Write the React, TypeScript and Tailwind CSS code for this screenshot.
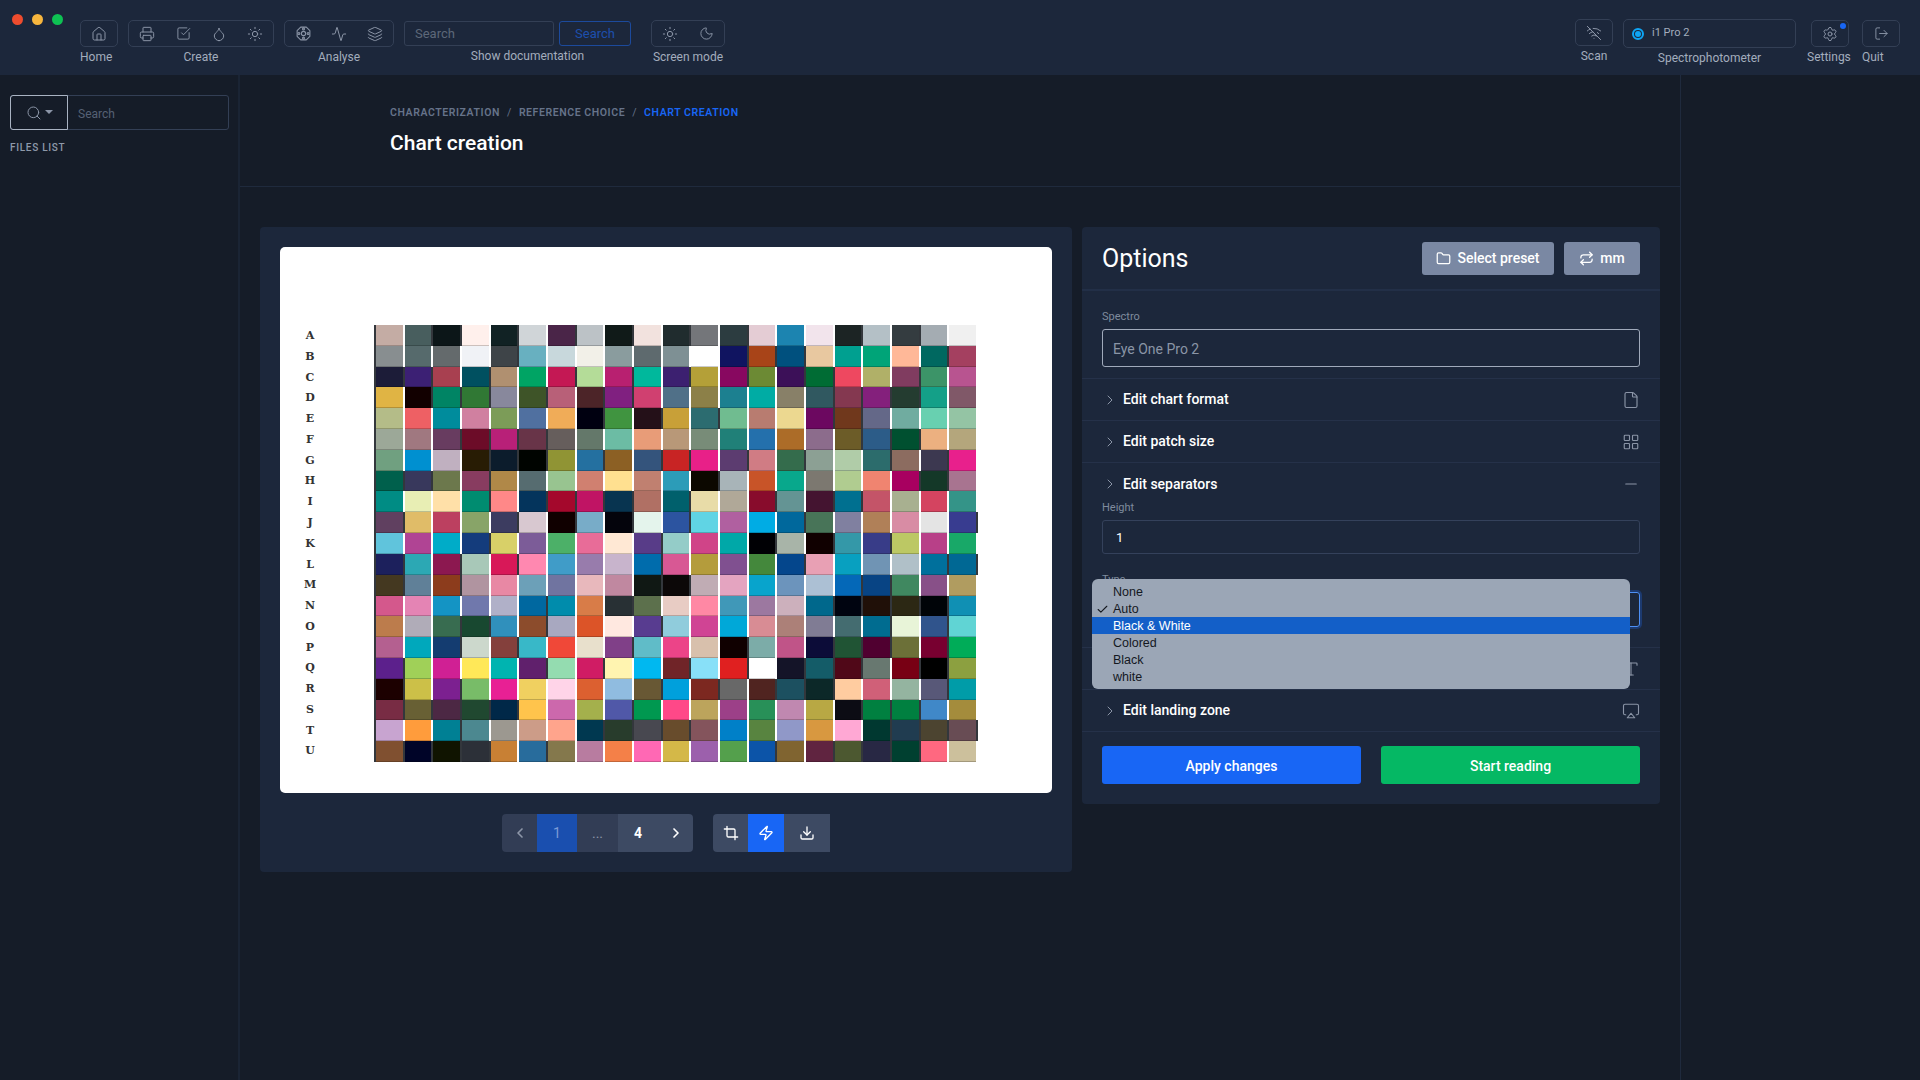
import type { ReactNode } from 'react'
import {
  Activity,
  Airplay,
  Check,
  ChevronLeft,
  ChevronRight,
  Crop,
  Download,
  File,
  Folder,
  Home,
  Layers,
  LayoutGrid,
  LogOut,
  Minus,
  Moon,
  Printer,
  Repeat,
  Search,
  Settings,
  SquareCheckBig,
  Sun,
  Droplet,
  Type,
  WifiOff,
  Zap,
} from 'lucide-react'

const CHART = `c4aca4 485e5e 0c1618 fff0ec 112224 d0d5d8 4a2548 bcc2c6 101a18 f2e2de 202c2e 74767a 2c3c40 e4ccd4 1c84b0 f2e4ec 1c2424 b4c0c6 343c40 a4acb2 f0f0f0
888e90 566a6c 646a6c f0f2f6 3e4448 68b0c0 c8d8dc f2f0e8 8a9c9e 5e6a6e 7e9094 ffffff 101460 a84418 00507e e8c8a0 00a090 00a478 ffb898 006860 a44060
1c1c38 3c2074 a84050 005060 b09070 00a464 c41854 b4dc98 b82070 00b89c 3c2070 b4a038 880860 6c8a34 3c1058 006c34 ee4860 b0b068 803c60 3c9468 b85490
e0b444 120000 008464 307834 88889c 3e5428 b86078 4c2428 802080 d04070 507088 8c8048 1c8090 00aca4 888068 305860 843850 84207c 243c30 14a088 805868
b4bc88 ee6064 008c9c d080a0 7c9c58 5070a0 f0ac58 000010 409440 241018 c8a038 2c6c70 70bc90 b87c70 ecd890 6c0860 70381c 646888 70aca0 68d0b0 94c4a4
9ca898 a07880 683c60 6c0c28 b82078 683448 665e5c 64786a 6cbca4 e89c78 b89878 788c78 208078 2470ac ac6c28 8c6c8c 6c5c28 2c5c88 005030 ecb080 b4a67c
70a080 0090d0 c0b0c0 281c04 0c1c2c 000400 909434 2470a0 8c6024 34547c c82424 e82088 5c3c70 d07c84 346c4c 8ca094 b0cca8 2c6c6c 8c6c60 3c3850 e8208c
00604c 38385c 6c784c 883c60 b08848 566c70 98c490 d08070 ffe090 c08070 2c9cb8 0c0800 a8b4b8 c85428 08a88c 7c7870 b0cc90 f08470 a80060 143828 a87490
008c84 e8eeb4 ffe0a8 008c70 ff8888 04345c a4082c c01464 083450 b07064 00606c e8dca8 b0a898 880c2c 649494 441430 007090 c45468 a8b090 d44460 349488
604060 e0bc68 bc4060 88a468 3c3c60 d8c8d0 100000 78acc8 04040c e4f4ec 2c54a0 60d4e4 b060a0 00ace4 00689c 487458 8080a0 b08058 d88ca4 e4e4e4 383c90
60c4dc b04494 00acc8 143c7c d8d068 7c5c98 4cb068 e86c98 ffe8d4 583c88 94ccc8 d04488 00a8a8 000004 a8b4a8 100000 3498a8 383c88 bcc864 b84088 18a868
1c205c 2ca8b4 8c1850 a8c8b8 d81858 ff88b0 409cc8 987cac c8b4cc 006cac d85894 b49c3c 805090 44883c 04468c e8a0b4 08a0c0 7094b4 b0c0c8 00709c 006894
443820 608098 8c3c1c b094a0 e888a4 6ca0b8 7074a0 e8b8bc c088a0 101814 0c0808 c0acb4 e4a4c0 08a4cc 6c94bc acc0d4 0468b8 084484 408860 885088 b09c60
d4588c e484b4 1494c4 7078ac b0b0c8 0068a0 008cac d87c48 283034 5c704c e8ccc4 ff88a4 4098b8 9c78a0 ccb0bc 00688c 000410 201008 2c2814 000408 1090b4
bc7c4c b0acb8 386c50 184830 3090bc 8c4c2c a8a8c0 dc5428 ffe8e0 583c90 90ccdc d04494 00a8d8 d88c94 ac8078 807c94 446c70 006c90 e8f4d8 30548c 60d4d4
b46090 00a8bc 143c70 ccd8cc 84403c 38b8c8 f04838 e8e0cc 804088 60bcc8 ec4488 d8c0ac 100000 7caca8 c05488 0c0c38 205434 500030 6c7038 780030 00ac58
5c208c a0d058 d02094 ffe858 00b4b0 60206c 94dcb0 d01c64 fff4b0 00b8f0 702428 88e0f8 e02020 ffffff 141428 145c68 500818 687870 780014 000000 8ca040
1c0000 ccc048 7c2090 78bc68 e82094 f0d060 ffd4e8 dc6030 90bce0 685834 00a0dc 7c2820 686868 502420 1c5060 0c2828 ffcca0 d06078 94b4a0 585878 009ca8
782c44 686034 4c2844 204830 002848 ffc44c cc68ac a4b04c 5058a8 009850 ff4888 bca45c 9c4088 289058 c088b0 b8a844 0c0c14 008040 008040 4088c8 a48c3c
c8a4d0 ff9c3c 008094 4c8890 9c9890 cc9c88 ffa48c 003850 283c2c 484850 684c2c 84545c 0080c8 588440 9098c8 d89840 ffa8d4 003830 203c50 4c4430 684c54
805030 000428 101400 2c3038 c88034 286c9c 84784c b87ca0 f48048 ff68b4 d4b848 9c60ac 54a04c 0c54a8 806430 602440 4c5830 282844 004030 ff6880 ccc09c`
  .split('\n')
  .map((row) => row.trim().split(' '))

const LETTERS = 'ABCDEFGHIJKLMNOPQRSTU'.split('')

const OPTIONS = ['None', 'Auto', 'Black & White', 'Colored', 'Black', 'white']

// separator takes the light or dark side depending on the patch before it
function separatorFor(hex: string) {
  const r = parseInt(hex.slice(0, 2), 16)
  const g = parseInt(hex.slice(2, 4), 16)
  const b = parseInt(hex.slice(4, 6), 16)
  return 0.3 * r + 0.59 * g + 0.11 * b > 95 ? '#ffffff' : '#33373c'
}

function ToolIcon({ children }: { children: ReactNode }) {
  return <span className="flex w-9 items-center justify-center text-[#8b95a7]">{children}</span>
}

function ToolBox({ children, className = '' }: { children: ReactNode; className?: string }) {
  return (
    <div className={`flex h-[27px] items-center justify-around rounded-[5px] border border-[#333f55] ${className}`}>
      {children}
    </div>
  )
}

function BarLabel({ children, className = '' }: { children: ReactNode; className?: string }) {
  return <div className={`text-[12px] leading-4 text-[#a3adbd] ${className}`}>{children}</div>
}

function AnalyseIcon() {
  return (
    <svg width="17" height="17" viewBox="0 0 24 24" fill="none" stroke="currentColor" strokeWidth="1.5">
      <path d="M8 3h8l5 5v8l-5 5H8l-5-5V8Z" strokeLinejoin="round" />
      <circle cx="12" cy="12" r="3" />
      <circle cx="12" cy="5.5" r="1.4" />
      <circle cx="12" cy="18.5" r="1.4" />
      <circle cx="5.5" cy="12" r="1.4" />
      <circle cx="18.5" cy="12" r="1.4" />
    </svg>
  )
}

function TopBar() {
  return (
    <header className="flex h-[75px] bg-[#1c273b]">
      <div className="flex w-[80px] shrink-0 gap-[9px] pl-[12px] pt-[14px]">
        <span className="h-[11px] w-[11px] rounded-full bg-[#ee4c2e]" />
        <span className="h-[11px] w-[11px] rounded-full bg-[#f7b63e]" />
        <span className="h-[11px] w-[11px] rounded-full bg-[#0ec253]" />
      </div>

      <div className="flex flex-1 pt-[20px]">
        <div className="w-[38px]">
          <ToolBox>
            <Home size={16} strokeWidth={1.5} className="text-[#8b95a7]" />
          </ToolBox>
          <BarLabel className="mt-[2px]">Home</BarLabel>
        </div>

        <div className="ml-[10px] w-[146px]">
          <ToolBox>
            <ToolIcon><Printer size={16} strokeWidth={1.5} /></ToolIcon>
            <ToolIcon><SquareCheckBig size={15} strokeWidth={1.5} /></ToolIcon>
            <ToolIcon><Droplet size={16} strokeWidth={1.5} /></ToolIcon>
            <ToolIcon><Sun size={16} strokeWidth={1.5} /></ToolIcon>
          </ToolBox>
          <BarLabel className="mt-[2px] text-center">Create</BarLabel>
        </div>

        <div className="ml-[10px] w-[110px]">
          <ToolBox>
            <ToolIcon><AnalyseIcon /></ToolIcon>
            <ToolIcon><Activity size={16} strokeWidth={1.5} /></ToolIcon>
            <ToolIcon><Layers size={16} strokeWidth={1.5} /></ToolIcon>
          </ToolBox>
          <BarLabel className="mt-[2px] text-center">Analyse</BarLabel>
        </div>

        <div className="ml-[10px] w-[227px] pt-[1px]">
          <div className="flex gap-[5px]">
            <div className="flex h-[25px] w-[150px] items-center rounded-[3px] border border-[#333f55] px-[10px] pt-[1px] text-[13px] text-[#5d6879]">
              Search
            </div>
            <div className="flex h-[25px] w-[72px] items-center justify-center rounded-[3px] border border-[#1c4a9c] text-[13px] text-[#1c4fad]">
              Search
            </div>
          </div>
          <BarLabel className="mt-[2px] pl-[20px] text-center">Show documentation</BarLabel>
        </div>

        <div className="ml-[20px] w-[74px]">
          <ToolBox>
            <ToolIcon><Sun size={16} strokeWidth={1.5} /></ToolIcon>
            <ToolIcon><Moon size={15} strokeWidth={1.5} /></ToolIcon>
          </ToolBox>
          <BarLabel className="mt-[2px] text-center">Screen mode</BarLabel>
        </div>
      </div>

      <div className="flex pr-[20px] pt-[19px]">
        <div className="w-[38px]">
          <ToolBox>
            <WifiOff size={16} strokeWidth={1.5} className="text-[#8b95a7]" />
          </ToolBox>
          <BarLabel className="mt-[2px] text-center">Scan</BarLabel>
        </div>

        <div className="ml-[10px] w-[173px]">
          <div className="flex h-[29px] items-center gap-[8px] rounded-[5px] border border-[#333f55] pl-[8px] text-[11px] text-[#a3adbd]">
            <span className="flex h-[12px] w-[12px] items-center justify-center rounded-full border-[2px] border-[#0ea5f5]">
              <span className="h-[6px] w-[6px] rounded-full bg-[#0ea5f5]" />
            </span>
            i1 Pro 2
          </div>
          <BarLabel className="mt-[2px] text-center">Spectrophotometer</BarLabel>
        </div>

        <div className="ml-[15px] w-[38px] pt-[1px]">
          <div className="relative">
            <ToolBox>
              <Settings size={16} strokeWidth={1.5} className="text-[#8b95a7]" />
            </ToolBox>
            <span className="absolute right-[3px] top-[3px] h-[6px] w-[6px] rounded-full bg-[#1866f5]" />
          </div>
          <BarLabel className="mt-[2px] whitespace-nowrap -ml-[4px]">Settings</BarLabel>
        </div>

        <div className="ml-[13px] w-[38px] pt-[1px]">
          <ToolBox>
            <LogOut size={15} strokeWidth={1.5} className="text-[#8b95a7]" />
          </ToolBox>
          <BarLabel className="mt-[2px]">Quit</BarLabel>
        </div>
      </div>
    </header>
  )
}

function Sidebar() {
  return (
    <aside className="border-r-2 border-[#1a2434] pl-[10px] pr-[9px] pt-[20px]">
      <div className="flex h-[35px] rounded-[3px] border border-[#333f55]">
        <div className="-m-[1px] flex w-[58px] items-center justify-center gap-[3px] rounded-l-[3px] border border-[#a9b3c2] text-[#8b95a7]">
          <Search size={16} strokeWidth={1.5} />
          <span className="mb-[2px] h-0 w-0 border-x-[4px] border-t-[4px] border-x-transparent border-t-[#8b95a7]" />
        </div>
        <div className="flex items-center pl-[11px] pt-[2px] text-[12px] text-[#566175]">Search</div>
      </div>
      <div className="mt-[10px] text-[10px] font-medium tracking-[0.07em] text-[#8e99aa]">FILES LIST</div>
    </aside>
  )
}

function ChartPreview() {
  return (
    <section className="w-[812px] rounded-[4px] bg-[#1c273b] px-[20px] pb-[20px] pt-[20px]">
      <div className="flex h-[546px] rounded-[5px] bg-white pt-[78px]">
        <div className="grid h-[437px] w-[94px] grid-rows-[repeat(21,1fr)] pr-[34px] pt-[1px] font-['DejaVu_Serif',serif] text-[11px] font-bold text-[#333333]">
          {LETTERS.map((letter) => (
            <div key={letter} className="flex items-center justify-center">{letter}</div>
          ))}
        </div>
        <div className="grid h-[437px] w-[604px] grid-cols-[repeat(21,1fr)] grid-rows-[repeat(21,1fr)] bg-[#33373c] pl-[2px]">
          {CHART.flat().map((hex, i) => (
            <div key={i} style={{ backgroundColor: separatorFor(hex) }}>
              <div className="mr-[2px] h-full border-b border-black/20" style={{ backgroundColor: `#${hex}` }} />
            </div>
          ))}
        </div>
      </div>

      <div className="mt-[21px] flex h-[38px] justify-center gap-[20px]">
        <div className="flex overflow-hidden rounded-[4px] text-[14px]">
          <div className="flex w-[35px] items-center justify-center bg-[#323d55] text-[#8d96a8]">
            <ChevronLeft size={16} strokeWidth={2.5} />
          </div>
          <div className="flex w-[40px] items-center justify-center bg-[#1a4faf] text-[#7d9bd6]">1</div>
          <div className="flex w-[41px] items-center justify-center bg-[#323d55] text-[#8d96a8]">...</div>
          <div className="flex w-[40px] items-center justify-center bg-[#3d4a63] font-bold text-white">4</div>
          <div className="flex w-[35px] items-center justify-center bg-[#3d4a63] text-white">
            <ChevronRight size={16} strokeWidth={2.5} />
          </div>
        </div>
        <div className="flex overflow-hidden rounded-l-[4px] text-white">
          <div className="flex w-[35px] items-center justify-center bg-[#3d4a63]"><Crop size={16} /></div>
          <div className="flex w-[36px] items-center justify-center bg-[#1866f5]"><Zap size={16} /></div>
          <div className="flex w-[46px] items-center justify-center bg-[#3d4a63]"><Download size={16} /></div>
        </div>
      </div>
    </section>
  )
}

function OptionRow({ title, icon, border = true }: { title?: string; icon: ReactNode; border?: boolean }) {
  return (
    <div className={`flex h-[42px] items-center px-[20px] ${border ? 'border-b border-[#253149]' : ''}`}>
      <ChevronRight size={16} strokeWidth={1.5} className="text-[#8b95a7]" />
      <span className="ml-[5px] flex-1 text-[14px] font-medium text-white">{title}</span>
      <span className="text-[#8b95a7]">{icon}</span>
    </div>
  )
}

function FieldLabel({ children }: { children: ReactNode }) {
  return <div className="text-[11px] leading-[14px] text-[#7f8b9d]">{children}</div>
}

function OptionsPanel() {
  return (
    <section className="relative w-[578px] self-start rounded-[4px] bg-[#1c273b]">
      <div className="flex h-[64px] items-center justify-between border-b-2 border-[#222f47] px-[20px] pt-[1px]">
        <h2 className="text-[25px] text-white">Options</h2>
        <div className="flex gap-[10px]">
          <div className="flex h-[33px] w-[132px] items-center justify-center gap-[6px] rounded-[3px] bg-[#7a88a3] text-[14px] font-medium text-white">
            <Folder size={15} />
            Select preset
          </div>
          <div className="flex h-[33px] w-[76px] items-center justify-center gap-[6px] rounded-[3px] bg-[#7a88a3] text-[14px] font-medium text-white">
            <Repeat size={15} />
            mm
          </div>
        </div>
      </div>

      <div className="border-b border-[#253149] px-[20px] pb-[11px] pt-[19px]">
        <FieldLabel>Spectro</FieldLabel>
        <div className="mt-[5px] flex h-[38px] items-center rounded-[3px] border border-[#a0aabb] px-[10px] pt-[2px] text-[14px] text-[#8a95a6]">
          Eye One Pro 2
        </div>
      </div>

      <OptionRow title="Edit chart format" icon={<File size={18} strokeWidth={1.5} />} />
      <OptionRow title="Edit patch size" icon={<LayoutGrid size={18} strokeWidth={1.5} />} />
      <OptionRow title="Edit separators" icon={<Minus size={18} strokeWidth={1.5} />} border={false} />

      <div className="border-b border-[#253149] px-[20px] pb-[20px]">
        <div className="-mt-[4px]"><FieldLabel>Height</FieldLabel></div>
        <div className="mt-[5px] flex h-[34px] items-center rounded-[3px] border border-[#34415b] px-[13px] pt-[2px] text-[13px] text-white">
          1
        </div>
        <div className="mt-[19px]"><FieldLabel>Type</FieldLabel></div>
        <div className="mt-[5px] h-[35px] rounded-[3px] border border-[#4d8ff5] shadow-[0_0_0_2px_#1c3a70]" />
      </div>

      {/* title of this row is covered by the open select */}
      <OptionRow icon={<Type size={18} strokeWidth={1.5} />} />
      <OptionRow title="Edit landing zone" icon={<Airplay size={18} strokeWidth={1.5} />} />

      <div className="flex gap-[20px] px-[20px] pb-[20px] pt-[14px]">
        <div className="flex h-[38px] flex-1 items-center justify-center rounded-[3px] bg-[#1866f5] pt-[2px] text-[14px] font-medium text-white">
          Apply changes
        </div>
        <div className="flex h-[38px] flex-1 items-center justify-center rounded-[3px] bg-[#05b864] pt-[2px] text-[14px] font-medium text-white">
          Start reading
        </div>
      </div>

      {/* native select popup, sits over the Type field */}
      <div className="absolute left-[10px] top-[352px] w-[538px] rounded-[6px] bg-[#9ba6b6] py-[4px] font-['Liberation_Sans',sans-serif] text-[12.5px] text-[#14181f]">
        {OPTIONS.map((option) => (
          <div
            key={option}
            className={`relative flex h-[17px] items-center pl-[21px] pt-[1px] ${option === 'Black & White' ? 'bg-[#135fc8] text-white' : ''}`}
          >
            {option === 'Auto' && <Check size={13} strokeWidth={2} className="absolute left-[4px]" />}
            {option}
          </div>
        ))}
      </div>
    </section>
  )
}

export default function App() {
  return (
    <div className="flex h-screen w-full flex-col overflow-hidden bg-[#151c28] font-['Roboto',sans-serif]">
      <TopBar />
      <div className="grid flex-1 grid-cols-[240px_1441px_239px]">
        <Sidebar />
        <main className="border-r border-[#1f2a3d]">
          <div className="h-[112px] border-b border-[#1f2a3d] pl-[150px] pt-[31px]">
            <div className="flex items-center gap-[7px] text-[10.5px] font-semibold leading-[14px] tracking-[0.055em] text-[#66738a]">
              <span>CHARACTERIZATION</span>
              <span className="font-normal">/</span>
              <span>REFERENCE CHOICE</span>
              <span className="font-normal">/</span>
              <span className="text-[#1866f5]">CHART CREATION</span>
            </div>
            <h1 className="mt-[9px] text-[21px] font-medium leading-7 text-white">Chart creation</h1>
          </div>
          <div className="flex items-start gap-[10px] pl-[20px] pt-[40px]">
            <ChartPreview />
            <OptionsPanel />
          </div>
        </main>
        <div />
      </div>
    </div>
  )
}
